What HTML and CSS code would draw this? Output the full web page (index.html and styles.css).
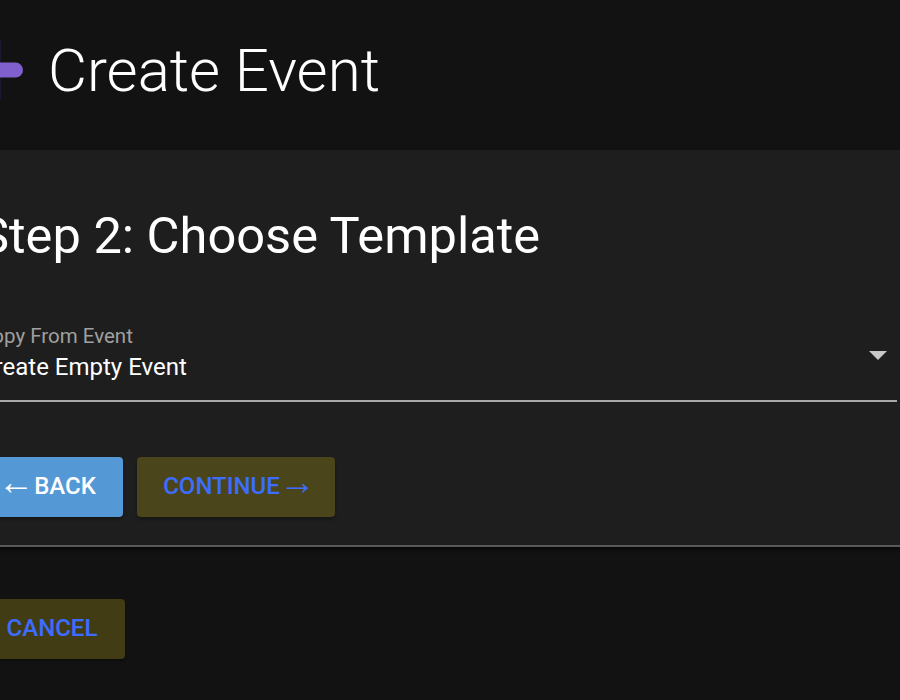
FILE: index.html
```html
<!DOCTYPE html>
<html lang="en">
<head>
    <meta charset="UTF-8">
    <title>Create Event</title>
    <link rel="stylesheet" href="styles.css">
</head>
<body>
    <div class="page">
        <div class="page-title">
            <svg class="title-icon" viewBox="0 0 48 60" aria-hidden="true">
                <rect x="25" y="0" width="1" height="60" fill="#1a1730"/>
                <rect x="0" y="22.500" width="48" height="15" rx="7.500" fill="#8060cc"/>
            </svg>
            <h1>Create Event</h1>
        </div>

        <div class="step-card">
            <h2>Step 2: Choose Template</h2>
            <div class="select-field">
                <label>Copy From Event</label>
                <div class="select-value">Create Empty Event</div>
                <span class="select-arrow"></span>
            </div>
            <div class="step-actions">
                <button class="btn btn-back"><span class="arrow arrow-left">&larr;</span>Back</button>
                <button class="btn btn-next">Continue<span class="arrow arrow-right">&rarr;</span></button>
            </div>
        </div>

        <div class="page-actions">
            <button class="btn btn-cancel"><span class="arrow arrow-left">&larr;</span>Cancel</button>
        </div>
    </div>
</body>
</html>
```

FILE: styles.css
```css
* {
    box-sizing: border-box;
}

html, body {
    margin: 0;
    height: 100%;
    overflow: hidden;
    background-color: #121212;
}

body {
    font-family: Roboto, sans-serif;
    color: #fff;
}

.page {
    width: 930px;
    margin-left: -26px;
}

.page-title {
    display: flex;
    align-items: center;
    gap: 25px;
    height: 150px;
    padding-bottom: 9px;
    margin-left: 1px;
}

.title-icon {
    width: 48px;
    height: 60px;
    margin-top: -1px;
    flex-shrink: 0;
}

.page-title h1 {
    margin: 0;
    font-size: 60px;
    font-weight: 300;
    line-height: 1;
    white-space: nowrap;
}

.step-card {
    background-color: #1e1e1e;
    height: 397px;
    padding: 56px 0 0 5px;
    border-bottom: 2px solid #5a5a5a;
    box-shadow: 0 3px 4px rgba(0,0,0,0.5);
}

.step-card h2 {
    margin: 0;
    font-size: 50.600px;
    font-weight: 400;
    line-height: 60px;
    white-space: nowrap;
}

.select-field {
    position: relative;
    margin-top: 58px;
    margin-right: 7px;
    height: 78px;
    border-bottom: 2px solid #a9a9a9;
}

.select-field label {
    display: block;
    font-size: 20.500px;
    line-height: 24px;
    color: #a0a0a0;
    white-space: nowrap;
}

.select-value {
    font-size: 24px;
    line-height: 38px;
    white-space: nowrap;
}

.select-arrow {
    position: absolute;
    right: 10px;
    top: 27px;
    border-left: 9px solid transparent;
    border-right: 9px solid transparent;
    border-top: 9px solid #c8c8c8;
}

.step-actions {
    display: flex;
    gap: 14px;
    margin-top: 55px;
    margin-left: -1px;
}

.btn {
    display: flex;
    align-items: center;
    justify-content: center;
    height: 60px;
    padding: 0 0 2px;
    border: none;
    border-radius: 4px;
    font-family: Roboto, sans-serif;
    font-size: 24px;
    font-weight: 500;
    text-transform: uppercase;
    white-space: nowrap;
    box-shadow: 0 2px 3px rgba(0,0,0,0.3);
}

.arrow {
    font-family: "Liberation Sans", sans-serif;
    font-size: 36px;
    font-weight: 400;
    line-height: 24px;
    margin-bottom: 9px;
}

.arrow-left {
    margin-left: -7px;
}

.arrow-right {
    margin-right: -7px;
}

.btn-back {
    width: 145px;
    background-color: #5598d6;
    color: #fff;
}

.btn-next {
    width: 198px;
    background-color: #4b451b;
    color: #3d6dff;
}

.page-actions {
    margin-top: 52px;
    margin-left: -26px;
}

.btn-cancel {
    width: 177px;
    padding-left: 2px;
    background-color: #423c15;
    color: #3d6dff;
}
```
